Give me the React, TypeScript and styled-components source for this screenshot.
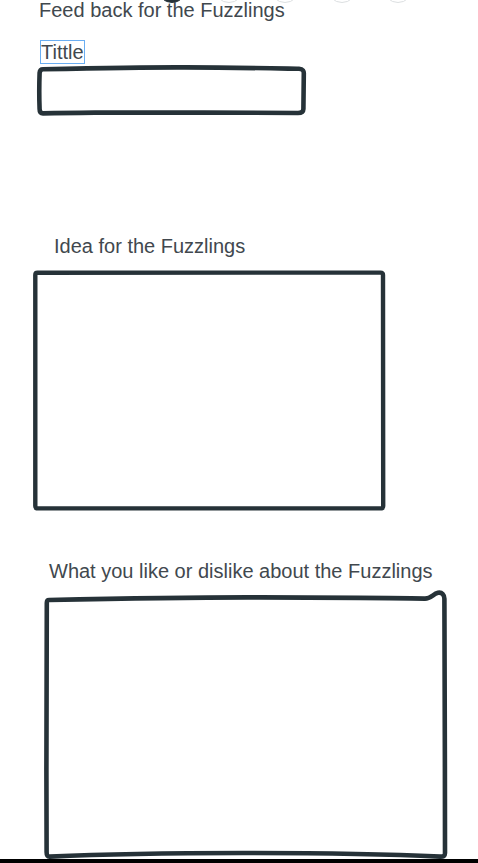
import React from "react";
import styled, { createGlobalStyle } from "styled-components";

const GlobalStyle = createGlobalStyle`
  html, body {
    margin: 0;
    padding: 0;
    background: #ffffff;
    overflow: hidden;
  }
  body {
    font-family: "Liberation Sans", Arial, sans-serif;
  }
`;

const TEXT = "#41484e";
const INK = "#263238";

const Page = styled.div`
  width: 478px;
  height: 863px;
  display: flex;
  flex-direction: column;
  overflow: hidden;
  background: #ffffff;
`;

const Stepper = styled.div`
  display: flex;
  gap: 26.5px;
  height: 30px;
  margin: -27px 0 0 157px;
`;

const Dot = styled.div<{ $active?: boolean }>`
  width: 30px;
  height: 30px;
  box-sizing: border-box;
  border-radius: 50%;
  background: ${(p) => (p.$active ? INK : "#ffffff")};
  border: 1.5px solid ${(p) => (p.$active ? INK : "#dcdfe1")};
  flex: none;
`;

const Heading = styled.div`
  margin: -4px 0 0 39px;
  font-size: 20px;
  line-height: 23px;
  color: ${TEXT};
  white-space: nowrap;
`;

const TitleLabel = styled.div`
  align-self: flex-start;
  margin: 18px 0 0 40px;
  border: 1px solid #6aaef2;
  font-size: 20px;
  line-height: 22px;
  color: ${TEXT};
  white-space: nowrap;
`;

const Label = styled.div<{ $top: number; $left: number }>`
  margin: ${(p) => p.$top}px 0 0 ${(p) => p.$left}px;
  font-size: 20px;
  line-height: 22px;
  color: ${TEXT};
  white-space: nowrap;
`;

const Sketch = styled.svg<{ $top: number; $left: number }>`
  display: block;
  flex: none;
  margin: ${(p) => p.$top}px 0 0 ${(p) => p.$left}px;
  overflow: visible;
`;

const BottomBar = styled.div`
  margin-top: auto;
  height: 4px;
  background: #000000;
  flex: none;
`;

const TitleBox = () => (
  <Sketch $top={0} $left={35} width={272} height={56} viewBox="0 0 272 56">
    <path
      d="M8 5.2 C 60 4.2, 120 3.2, 150 3.4 C 200 3.6, 240 4.4, 264 4.8 C 268 5, 269 7, 268.8 10 C 268.6 22, 268.6 34, 268.4 45 C 268.3 48, 266.5 49, 263 49 C 200 48.8, 120 48.2, 60 48.6 C 30 48.8, 15 49.2, 8 49.4 C 5.6 49.4, 4.6 48, 4.6 45 C 4.2 35, 4.2 20, 4.6 9 C 4.8 6.4, 5.8 5.2, 8 5.2 Z"
      fill="none"
      stroke={INK}
      strokeWidth={4.6}
      strokeLinejoin="round"
    />
  </Sketch>
);

const IdeaBox = () => (
  <Sketch $top={9} $left={30} width={360} height={248} viewBox="0 0 360 248">
    <path
      d="M7.5 6.8 L 350.5 6.6 C 352.5 6.6, 353 7.5, 353 9 L 353.2 240 C 353.2 241.8, 352.4 242.4, 350.5 242.4 L 7.8 242.4 C 6 242.4, 5.3 241.6, 5.3 240 L 5.3 9 C 5.3 7.5, 6 6.8, 7.5 6.8 Z"
      fill="none"
      stroke={INK}
      strokeWidth={4.4}
      strokeLinejoin="round"
    />
  </Sketch>
);

const OpinionBox = () => (
  <Sketch $top={6} $left={40} width={412} height={271} viewBox="0 0 412 271">
    <path
      d="M9 12 C 80 10.5, 160 9.2, 220 9.4 C 300 9.6, 360 9.8, 385 10.6 C 391 10.6, 393 6, 398 4.8 C 402 4, 404.5 7, 404.4 11 C 404.6 80, 405 180, 405 265 C 405 268, 403.5 268.8, 400 268.6 C 300 264, 120 263.5, 10 268.6 C 7.5 268.8, 6.6 267.5, 6.6 264 C 6.4 180, 6 80, 6.8 15 C 6.8 13, 7.5 12, 9 12 Z"
      fill="none"
      stroke={INK}
      strokeWidth={4.6}
      strokeLinejoin="round"
    />
  </Sketch>
);

export default function App() {
  return (
    <>
      <GlobalStyle />
      <Page>
        <Stepper>
          <Dot $active />
          <Dot />
          <Dot />
          <Dot />
          <Dot />
        </Stepper>
        <Heading>Feed back for the Fuzzlings</Heading>
        <TitleLabel>Tittle</TitleLabel>
        <TitleBox />
        <Label $top={115} $left={54}>Idea for the Fuzzlings</Label>
        <IdeaBox />
        <Label $top={46} $left={49}>What you like or dislike about the Fuzzlings</Label>
        <OpinionBox />
        <BottomBar />
      </Page>
    </>
  );
}
